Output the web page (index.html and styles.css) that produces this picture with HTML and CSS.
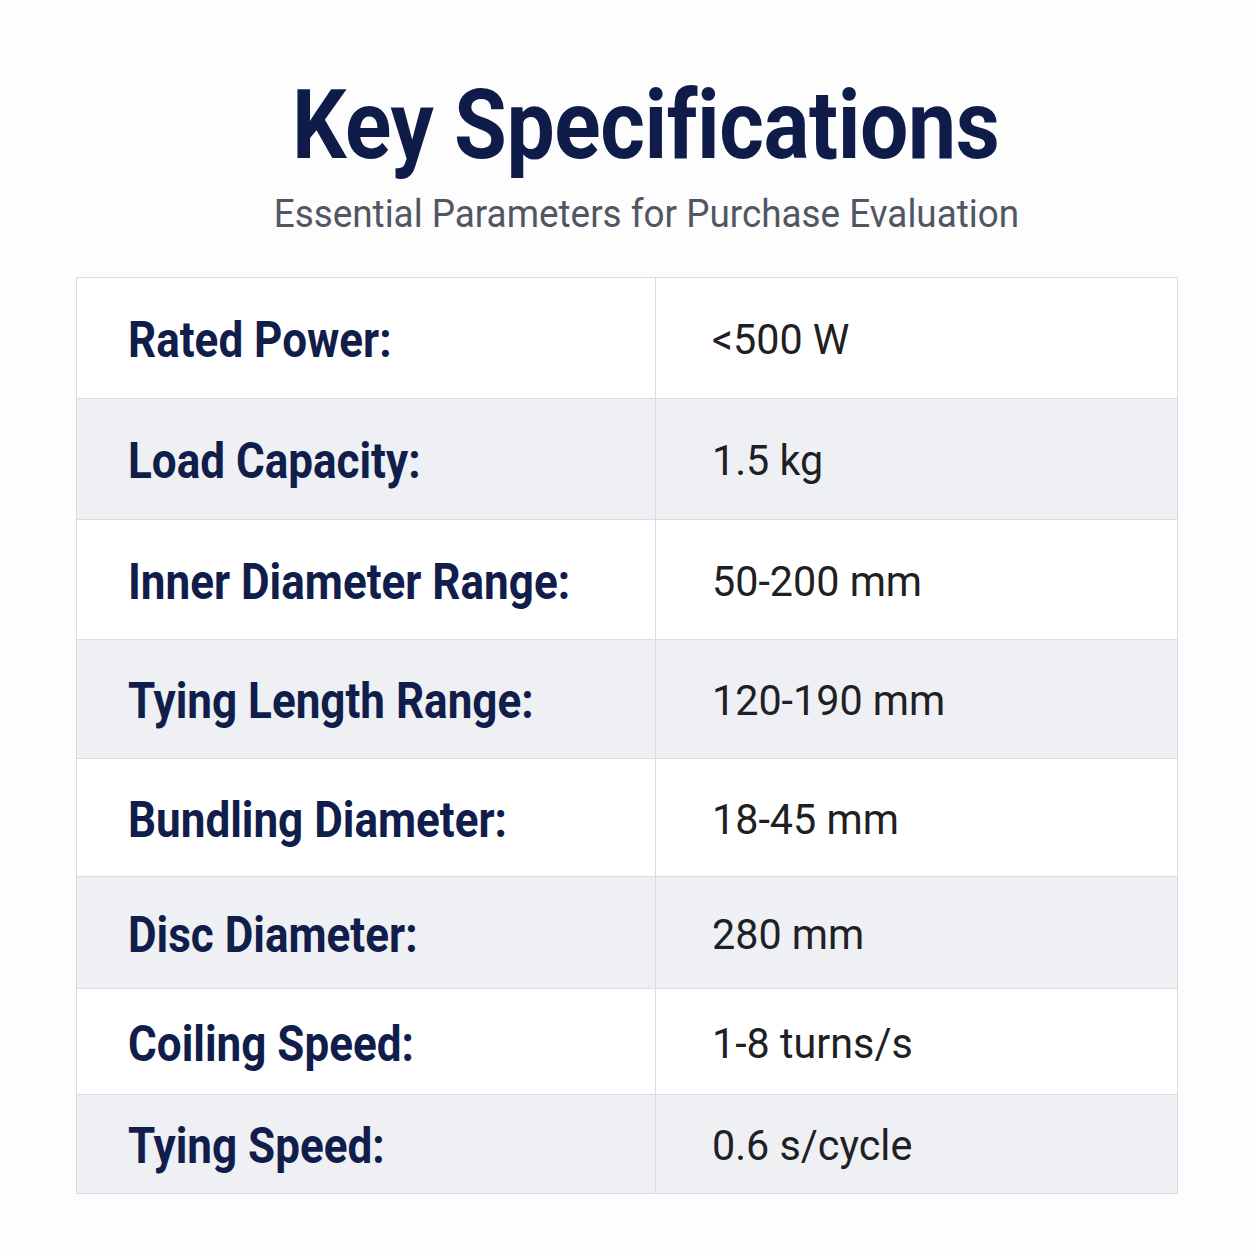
FILE: index.html
```html
<!DOCTYPE html>
<html lang="en">
<head>
<meta charset="utf-8">
<title>Key Specifications</title>
<link rel="stylesheet" href="styles.css">
</head>
<body>
<main class="page">
  <header class="head">
    <h1 class="title"><span class="title-text">Key Specifications</span></h1>
    <p class="subtitle"><span class="subtitle-text">Essential Parameters for Purchase Evaluation</span></p>
  </header>
  <section class="specs">
    <div class="row"><div class="label"><span>Rated Power:</span></div><div class="value"><span>&lt;500 W</span></div></div>
    <div class="row"><div class="label"><span>Load Capacity:</span></div><div class="value"><span>1.5 kg</span></div></div>
    <div class="row"><div class="label"><span>Inner Diameter Range:</span></div><div class="value"><span>50-200 mm</span></div></div>
    <div class="row"><div class="label"><span>Tying Length Range:</span></div><div class="value"><span>120-190 mm</span></div></div>
    <div class="row"><div class="label"><span>Bundling Diameter:</span></div><div class="value"><span>18-45 mm</span></div></div>
    <div class="row"><div class="label"><span>Disc Diameter:</span></div><div class="value"><span>280 mm</span></div></div>
    <div class="row"><div class="label"><span>Coiling Speed:</span></div><div class="value"><span>1-8 turns/s</span></div></div>
    <div class="row"><div class="label"><span>Tying Speed:</span></div><div class="value"><span>0.6 s/cycle</span></div></div>
  </section>
</main>
</body>
</html>
```

FILE: styles.css
```css
html, body {
  margin: 0;
  padding: 0;
  background: #fdfdfd;
}

.page {
  width: 1254px;
  height: 1254px;
  box-sizing: border-box;
  padding-top: 77px;
  display: flex;
  flex-direction: column;
  align-items: center;
  font-family: Roboto, "Liberation Sans", sans-serif;
}

.head {
  display: flex;
  flex-direction: column;
  align-items: center;
  margin-left: 38px;
}

.title {
  margin: 0;
  font-size: 97px;
  line-height: 1;
  font-weight: 700;
  color: #0f1c4a;
  letter-spacing: -0.5px;
}

.title-text {
  display: inline-block;
  transform: scaleX(0.885);
  transform-origin: center;
  white-space: nowrap;
}

.subtitle {
  margin: 21px 0 0;
  font-size: 39px;
  line-height: 1;
  font-weight: 400;
  color: #515663;
}

.subtitle-text {
  display: inline-block;
  transform: scaleX(0.945);
  transform-origin: center;
  white-space: nowrap;
}

.specs {
  margin-top: 43px;
  width: 1102px;
  border: 1px solid #d9dce2;
  box-sizing: border-box;
  display: flex;
  flex-direction: column;
}

.row {
  display: grid;
  grid-template-columns: 579px 1fr;
  border-bottom: 1px solid #d9dce2;
  box-sizing: border-box;
  background: #ffffff;
}

.row:nth-child(even) {
  background: #eef0f4;
}

.row:last-child {
  border-bottom: none;
}

.row:nth-child(1) { height: 121px; }
.row:nth-child(2) { height: 121px; }
.row:nth-child(3) { height: 120px; }
.row:nth-child(4) { height: 119px; }
.row:nth-child(5) { height: 118px; }
.row:nth-child(6) { height: 112px; }
.row:nth-child(7) { height: 106px; }
.row:nth-child(8) { height: 98px; }

.label {
  border-right: 1px solid #d9dce2;
  display: flex;
  align-items: center;
  padding-left: 51px;
  padding-top: 4px;
  font-size: 50px;
  font-weight: 700;
  color: #111d4b;
}

.label span {
  display: inline-block;
  transform: scaleX(0.88);
  transform-origin: left center;
  white-space: nowrap;
}

.value {
  display: flex;
  align-items: center;
  padding-left: 56px;
  padding-top: 2px;
  font-size: 43px;
  font-weight: 400;
  color: #1f2024;
}

.value span {
  display: inline-block;
  transform: scaleX(0.96);
  transform-origin: left center;
  white-space: nowrap;
}
```
